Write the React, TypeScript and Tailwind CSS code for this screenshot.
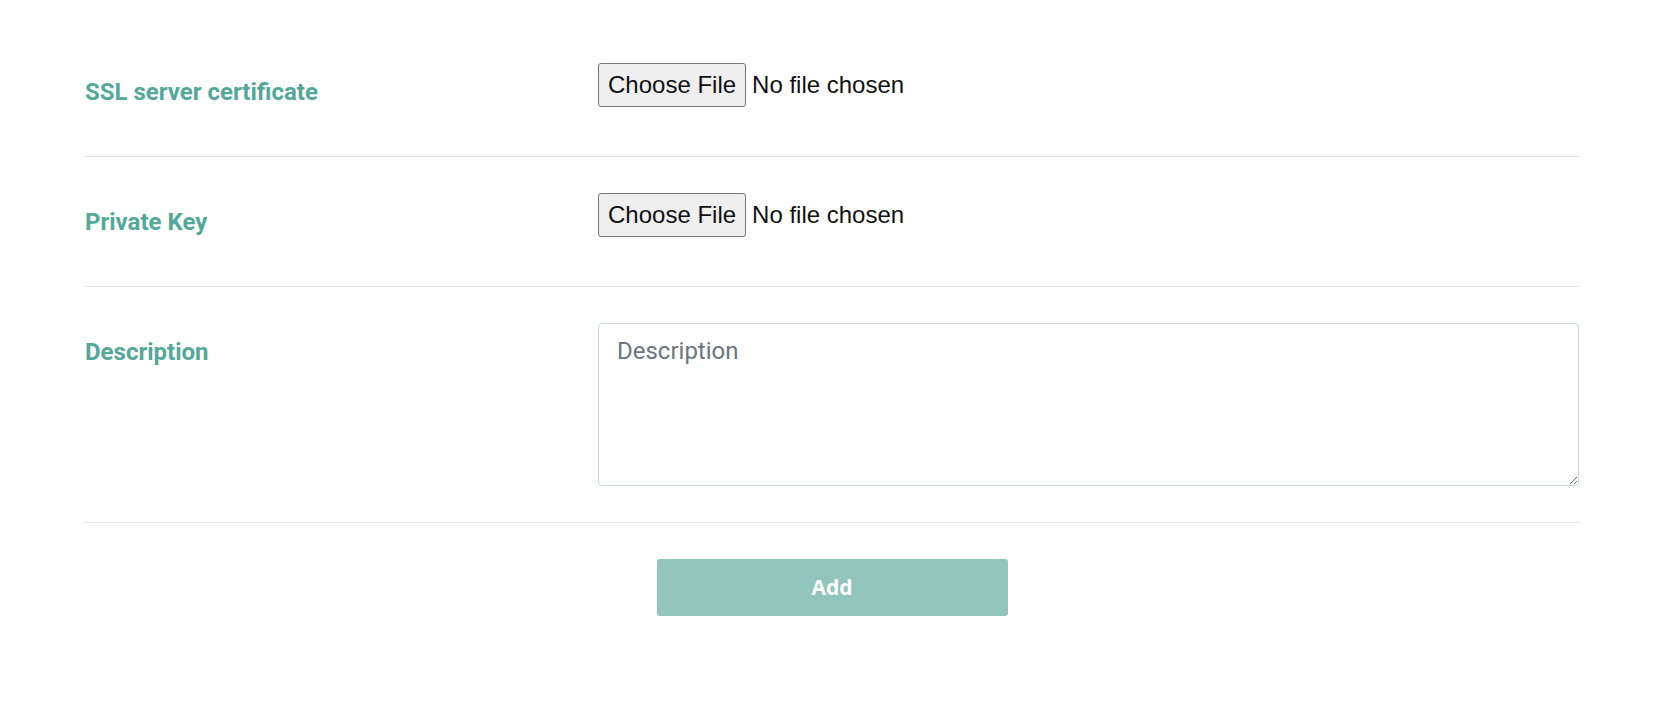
import { useState } from 'react';

interface FileFieldProps {
  label: string;
  name: string;
}

function FileField({ label, name }: FileFieldProps) {
  const [fileName, setFileName] = useState<string | null>(null);

  return (
    <div className="flex border-b border-[#e4e4e4] pt-[36px] pb-[37px]">
      <div className="w-[513px] shrink-0 pt-[11px]">
        <span className="text-[24px] leading-[36px] font-bold text-[#54a898] font-['Roboto',sans-serif]">{label}</span>
      </div>
      <div className="h-[56px]">
        <label className="flex items-center cursor-pointer font-['Liberation_Sans',Arial,sans-serif] text-[24px] text-[#111]">
          <input
            type="file"
            name={name}
            className="hidden"
            onChange={(e) => setFileName(e.target.files?.[0]?.name ?? null)}
          />
          <span className="h-[44px] px-[9px] flex items-center bg-[#efefef] border border-[#767676] rounded-[3px] leading-none">
            Choose File
          </span>
          <span className="ml-[6px] leading-none">{fileName ?? 'No file chosen'}</span>
        </label>
      </div>
    </div>
  );
}

export default function App() {
  const [description, setDescription] = useState('');

  return (
    <div className="min-h-screen bg-white pl-[85px] pt-[27px]">
      <form className="w-[1494px]" onSubmit={(e) => e.preventDefault()}>
        <FileField label="SSL server certificate" name="certificate" />
        <FileField label="Private Key" name="privateKey" />
        <div className="flex border-b border-[#e4e4e4] pt-[36px] pb-[36px]">
          <div className="w-[513px] shrink-0 pt-[11px]">
            <span className="text-[24px] leading-[36px] font-bold text-[#54a898] font-['Roboto',sans-serif]">Description</span>
          </div>
          <textarea
            value={description}
            onChange={(e) => setDescription(e.target.value)}
            placeholder="Description"
            className="w-[981px] h-[163px] border border-[#ced4da] rounded-[4px] px-[18px] py-[9px] text-[24px] leading-[36px] text-[#495057] placeholder:text-[#6c757d] font-['Roboto',sans-serif] outline-none"
          />
        </div>
        <div className="flex justify-center pt-[36px]">
          <button
            type="submit"
            className="w-[351px] h-[57px] rounded-[3px] bg-[#92c5bc] text-white text-[21px] font-bold font-['Open_Sans',sans-serif]"
          >
            Add
          </button>
        </div>
      </form>
    </div>
  );
}
